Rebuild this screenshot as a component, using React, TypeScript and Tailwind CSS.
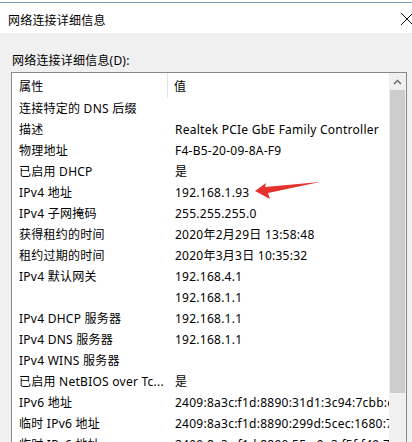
import React from "react";

const rows: [string, string][] = [
  ["连接特定的 DNS 后缀", ""],
  ["描述", "Realtek PCIe GbE Family Controller"],
  ["物理地址", "F4-B5-20-09-8A-F9"],
  ["已启用 DHCP", "是"],
  ["IPv4 地址", "192.168.1.93"],
  ["IPv4 子网掩码", "255.255.255.0"],
  ["获得租约的时间", "2020年2月29日 13:58:48"],
  ["租约过期的时间", "2020年3月3日 10:35:32"],
  ["IPv4 默认网关", "192.168.4.1"],
  ["", "192.168.1.1"],
  ["IPv4 DHCP 服务器", "192.168.1.1"],
  ["IPv4 DNS 服务器", "192.168.1.1"],
  ["IPv4 WINS 服务器", ""],
  ["已启用 NetBIOS over Tc...", "是"],
  ["IPv6 地址", "2409:8a3c:f1d:8890:31d1:3c94:7cbb:e5a1"],
  ["临时 IPv6 地址", "2409:8a3c:f1d:8890:299d:5cec:1680:7a2e"],
  ["临时 IPv6 地址", "2409:8a3c:f1d:8890:55a:9a3:f5f:f49:745"],
];

export default function App() {
  return (
    <div
      className="relative w-[412px] h-[442px] overflow-hidden bg-[#f0f0f0] text-[12px] text-black"
      style={{ fontFamily: '"Noto Sans", "Noto Sans CJK SC", sans-serif' }}
    >
      <div className="h-[3px] bg-white border-b border-[#7b9bb6]" />
      <div className="h-[30px] bg-white flex items-center justify-between pl-[8px] pt-[6px]">
        <span className="text-[12px] leading-none tracking-[0.2px]">网络连接详细信息</span>
        <svg width="14" height="14" viewBox="0 0 14 14" className="mr-[-2px] mt-[-4px]">
          <path d="M1 1 L13 13 M13 1 L1 13" stroke="#111" strokeWidth="1" fill="none" />
        </svg>
      </div>
      <div className="pt-[20px] pl-[11px]">
        <div className="h-[16px] leading-[16px] pl-[1px] tracking-[0.2px]">网络连接详细信息(D):</div>
        <div className="mt-[3px] w-[396px] h-[400px] border border-[#828790] bg-white flex">
          <div className="flex-1 overflow-hidden tracking-[0.25px]">
            <div className="h-[25px] flex">
              <div className="w-[156px] h-full flex items-center pl-[7px] pt-[2px] border-r border-[#e5e5e5]">属性</div>
              <div className="h-full flex items-center pl-[6px] pt-[2px]">值</div>
            </div>
            {rows.map(([k, v], i) => (
              <div key={i} className="h-[21px] flex items-center whitespace-nowrap">
                <div className="w-[157px] shrink-0 pl-[7px] overflow-hidden">{k}</div>
                <div className="pl-[6px]">{v}</div>
              </div>
            ))}
          </div>
          <div className="w-[17px] bg-[#f0f0f0] flex flex-col items-center">
            <div className="h-[17px] w-full flex items-center justify-center">
              <svg width="9" height="6" viewBox="0 0 9 6">
                <path d="M1 5 L4.5 1.5 L8 5" stroke="#606060" strokeWidth="1.3" fill="none" />
              </svg>
            </div>
            <div className="w-[15px] h-[303px] bg-[#cdcdcd]" />
          </div>
        </div>
      </div>
      <svg className="absolute left-0 top-0 pointer-events-none" width="412" height="442">
        <polygon points="255,191 266,183 265,187 320,182 268,193 270,199" fill="#e5322d" />
      </svg>
    </div>
  );
}
